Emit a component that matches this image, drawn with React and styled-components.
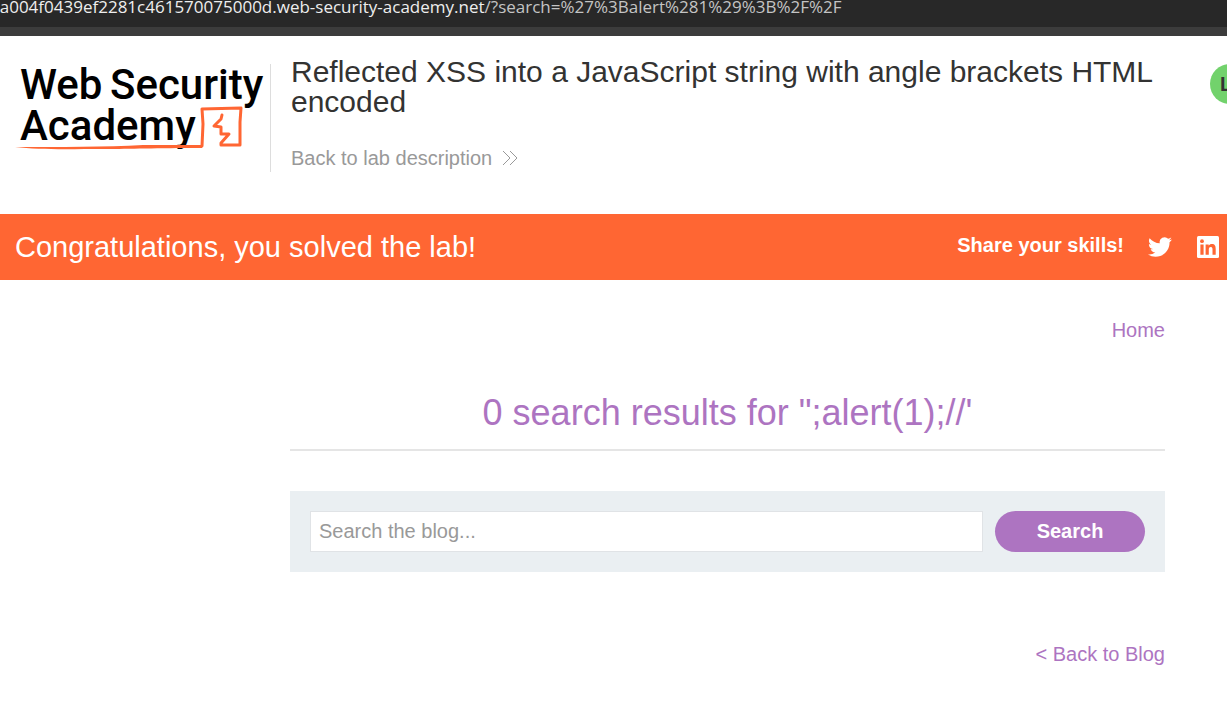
import React from "react";
import styled, { createGlobalStyle } from "styled-components";

const accent = "#ad74c1";
const orange = "#ff6633";

const GlobalStyle = createGlobalStyle`
  *, *::before, *::after { box-sizing: border-box; }
  body {
    margin: 0;
    background: #fff;
    color: #333332;
    font-family: "Liberation Sans", Arial, sans-serif;
    font-size: 20px;
    line-height: 24px;
    overflow-x: hidden;
  }
  h1, h2, p { margin: 0; font-weight: 400; }
  a { color: inherit; text-decoration: none; }
`;

const AddressBar = styled.div`
  height: 36px;
  display: flex;
  justify-content: flex-start;
  background: #282828;
  border-bottom: 9px solid #3c3c3c;
  color: #c4c4c4;
  font-family: "Open Sans", "Noto Sans", sans-serif;
  font-size: 17px;
  line-height: 14px;
  white-space: nowrap;
`;

const AddressText = styled.span`
  margin-left: -10px;
`;

const Host = styled.span`
  color: #eeeeee;
`;

const Header = styled.header`
  display: flex;
  align-items: flex-start;
  min-height: 178px;
  padding: 21px 0 41px 15px;
  overflow: hidden;
`;

const LogoLink = styled.a`
  flex: none;
  margin-top: 7px;
  width: 256px;
  height: 108px;
  border-right: 1px solid #dddddd;
`;

const LogoText = styled.text`
  font-family: Roboto, sans-serif;
  font-size: 42px;
  font-weight: 500;
  fill: #000;
`;

const TitleBlock = styled.div`
  flex: 1;
  min-width: 0;
  padding: 0 40px 0 20px;
`;

const Title = styled.h2`
  font-size: 30px;
  line-height: 30px;
  margin-bottom: 26px;
`;

const LabLink = styled.a`
  display: flex;
  align-items: center;
  gap: 10px;
  width: fit-content;
  height: 30px;
  color: #999999;
`;

const Status = styled.div`
  flex: none;
  width: 40px;
  height: 40px;
  margin: 7px -23px 0 0;
  padding-left: 10px;
  border-radius: 50%;
  background: #72d26c;
  font-weight: 700;
  line-height: 40px;
`;

const Banner = styled.section`
  display: flex;
  align-items: center;
  justify-content: space-between;
  min-height: 66px;
  padding: 0 7px 0 15px;
  background: ${orange};
  color: #fff;
`;

const BannerText = styled.p`
  font-size: 29px;
  line-height: 34px;
`;

const Share = styled.div`
  display: flex;
  align-items: center;
  gap: 24px;
  font-weight: 700;
  svg { display: block; }
`;

const ShareLabel = styled.span`
  padding-bottom: 4px;
`;

const Main = styled.main`
  padding: 38px 62px 40px 290px;
`;

const Nav = styled.nav`
  display: flex;
  justify-content: flex-end;
  color: ${accent};
`;

const ResultHeading = styled.h1`
  margin-top: 46px;
  padding-bottom: 11px;
  margin-bottom: 40px;
  border-bottom: 2px solid #e5e5e5;
  color: ${accent};
  font-size: 36px;
  line-height: 50px;
  text-align: center;
`;

const SearchForm = styled.form`
  display: flex;
  gap: 12px;
  margin-bottom: 70px;
  padding: 20px;
  background: #eaeff2;
`;

const SearchInput = styled.input`
  flex: 1;
  min-width: 0;
  height: 41px;
  padding: 0 8px;
  border: 1px solid #e0e3e6;
  border-radius: 0;
  background: #fff;
  color: #333332;
  font: inherit;
  &::placeholder { color: #999999; opacity: 1; }
`;

const SearchButton = styled.button`
  width: 150px;
  height: 41px;
  padding: 0 0 2px;
  border: 0;
  border-radius: 21px;
  background: ${accent};
  color: #fff;
  font: inherit;
  font-weight: 700;
`;

function Logo() {
  return (
    <svg width="255" height="90" viewBox="0 0 255 90" role="img" aria-label="Web Security Academy">
      <LogoText x="5" y="35">Web</LogoText>
      <LogoText x="95" y="35">Security</LogoText>
      <LogoText x="5" y="76">Academy</LogoText>
      <path d="M0 83 C44 83 91 83 128 81 L188 81 L187 84 C140 84 115 85 90 85 C55 85 24 86 0 83Z" fill={orange} />
      <path d="M187 82 L188 60 L187 45 L226 44 L225 58 L225 81 L206 81 L206 79 L214 70 L206 70 L206 63 L199 62 L206 55 L207 51" fill="none" stroke={orange} strokeWidth="3" strokeLinejoin="round" strokeLinecap="round" />
    </svg>
  );
}

function DoubleChevron() {
  return (
    <svg width="16" height="16" viewBox="0 0 16 16" fill="none" stroke="#999999" aria-hidden="true">
      <path d="M1 1l7 7-7 7M8 1l7 7-7 7" />
    </svg>
  );
}

function Twitter() {
  return (
    <svg width="24" height="24" viewBox="0 0 24 24" fill="#fff" aria-hidden="true">
      <path d="M23.95 4.57a10 10 0 0 1-2.82.77 4.96 4.96 0 0 0 2.16-2.72c-.95.55-2 .95-3.13 1.18a4.92 4.92 0 0 0-8.38 4.48C7.69 8.1 4.07 6.13 1.64 3.16a4.82 4.82 0 0 0-.67 2.48c0 1.71.87 3.21 2.19 4.1a4.9 4.9 0 0 1-2.23-.62v.06a4.92 4.92 0 0 0 3.95 4.83 5 5 0 0 1-2.21.08 4.94 4.94 0 0 0 4.6 3.42A9.87 9.87 0 0 1 0 19.54a14 14 0 0 0 7.55 2.21c9.05 0 14-7.5 14-13.98 0-.21 0-.42-.02-.63a9.94 9.94 0 0 0 2.42-2.57z" />
    </svg>
  );
}

function LinkedIn() {
  return (
    <svg width="24" height="24" viewBox="0 0 24 24" aria-hidden="true">
      <rect x="1" y="1" width="22" height="22" rx="1.5" fill="#fff" />
      <g fill={orange}>
        <circle cx="6" cy="6.2" r="1.9" />
        <path d="M4.4 9.4h3.2v10.3H4.4zM9.6 9.4h3.1v1.4c.6-1 1.7-1.7 3.1-1.7 3.2 0 3.9 2.1 3.9 4.9v5.7h-3.2v-5c0-1.2 0-2.8-1.7-2.8s-2 1.3-2 2.7v5.1H9.6z" />
      </g>
    </svg>
  );
}

export default function App() {
  return (
    <>
      <GlobalStyle />
      <AddressBar>
        <AddressText>
          <Host>0a004f0439ef2281c461570075000d.web-security-academy.net</Host>
          /?search=%27%3Balert%281%29%3B%2F%2F
        </AddressText>
      </AddressBar>
      <Header>
        <LogoLink href="#academy">
          <Logo />
        </LogoLink>
        <TitleBlock>
          <Title>Reflected XSS into a JavaScript string with angle brackets HTML encoded</Title>
          <LabLink href="#description">
            Back to lab description
            <DoubleChevron />
          </LabLink>
        </TitleBlock>
        <Status>L</Status>
      </Header>
      <Banner>
        <BannerText>Congratulations, you solved the lab!</BannerText>
        <Share>
          <ShareLabel>Share your skills!</ShareLabel>
          <a href="#twitter" aria-label="Share on Twitter"><Twitter /></a>
          <a href="#linkedin" aria-label="Share on LinkedIn"><LinkedIn /></a>
        </Share>
      </Banner>
      <Main>
        <Nav>
          <a href="#home">Home</a>
        </Nav>
        <ResultHeading>0 search results for &quot;;alert(1);//&apos;</ResultHeading>
        <SearchForm onSubmit={(event) => event.preventDefault()}>
          <SearchInput type="text" name="search" aria-label="Search the blog" placeholder="Search the blog..." />
          <SearchButton type="submit">Search</SearchButton>
        </SearchForm>
        <Nav>
          <a href="#blog">&lt; Back to Blog</a>
        </Nav>
      </Main>
    </>
  );
}
